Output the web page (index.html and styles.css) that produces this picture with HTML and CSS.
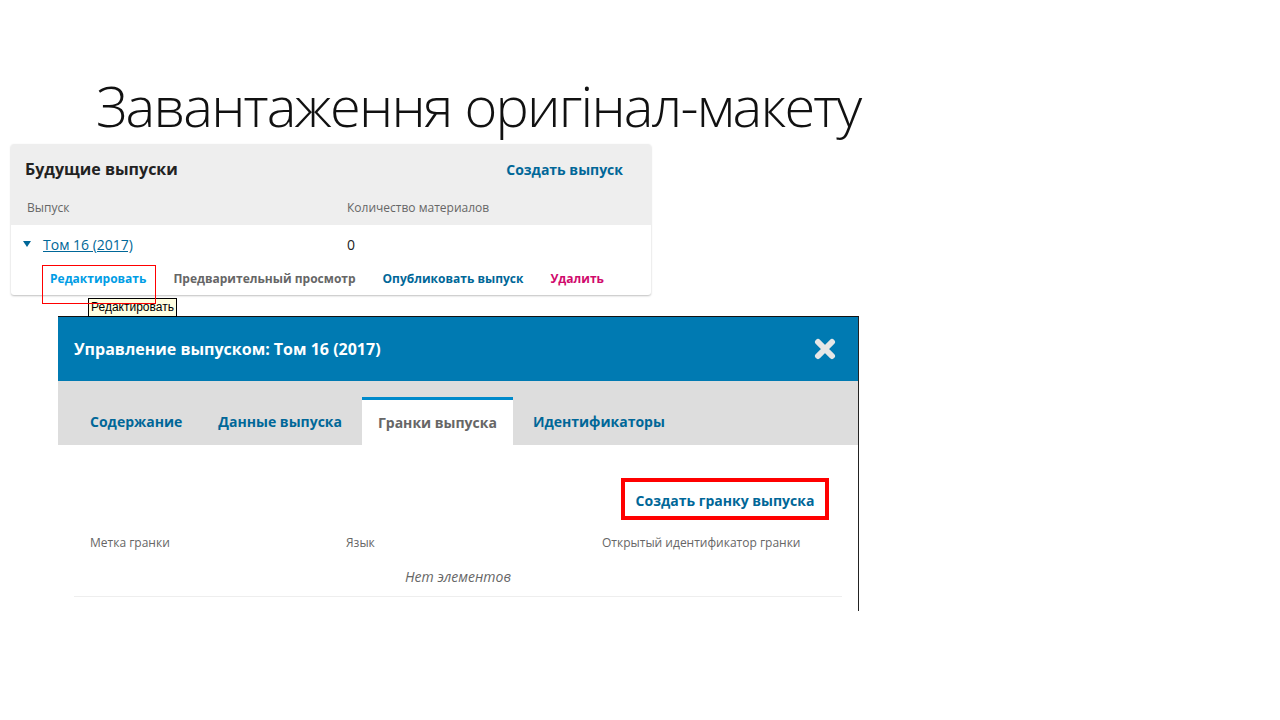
FILE: index.html
```html
<!DOCTYPE html>
<html lang="uk">
<head>
  <meta charset="UTF-8" />
  <title>Завантаження оригінал-макету</title>
  <link rel="stylesheet" href="styles.css">
</head>
<body>

<div class="slide">
  <h1 class="slide-title">Завантаження оригінал-макету</h1>

  <!-- Будущие выпуски -->
  <div class="card">
    <div class="card-top">
      <span class="card-title">Будущие выпуски</span>
      <a class="link-strong" href="#">Создать выпуск</a>
    </div>
    <div class="card-cols">
      <span class="col-issue">Выпуск</span>
      <span>Количество материалов</span>
    </div>
    <div class="card-row">
      <span class="col-issue"><span class="caret"></span><a class="issue-link" href="#">Том 16 (2017)</a></span>
      <span>0</span>
    </div>
    <div class="card-actions">
      <a class="act act-edit" href="#">Редактировать<span class="mark-box"></span><span class="tooltip">Редактировать</span></a>
      <a class="act act-grey" href="#">Предварительный просмотр</a>
      <a class="act act-blue" href="#">Опубликовать выпуск</a>
      <a class="act act-del" href="#">Удалить</a>
    </div>
  </div>

  <!-- Модальное окно -->
  <div class="modal">
    <div class="modal-head">
      <span class="modal-title">Управление выпуском: Том 16 (2017)</span>
      <svg class="close" width="22" height="22" viewBox="0 0 22 22">
        <path d="M4 4 L18 18 M18 4 L4 18" stroke="#e6e6e6" stroke-width="6" stroke-linecap="round"/>
      </svg>
    </div>
    <div class="tabs">
      <a class="tab" href="#">Содержание</a>
      <a class="tab" href="#">Данные выпуска</a>
      <a class="tab active" href="#">Гранки выпуска</a>
      <a class="tab" href="#">Идентификаторы</a>
    </div>
    <div class="modal-body">
      <div class="grid-actions">
        <a class="add-galley" href="#">Создать гранку выпуска</a>
      </div>
      <div class="grid-cols">
        <span>Метка гранки</span>
        <span>Язык</span>
        <span>Открытый идентификатор гранки</span>
      </div>
      <div class="grid-empty">Нет элементов</div>
    </div>
  </div>
</div>

</body>
</html>
```

FILE: styles.css
```css
body {
  margin: 0;
  background: #fff;
  font-family: "Open Sans", "Noto Sans", sans-serif;
  color: #222;
}

a {
  text-decoration: none;
}

.slide {
  width: 1280px;
  height: 720px;
  overflow: hidden;
  padding-top: 70px;
  box-sizing: border-box;
}

.slide-title {
  margin: 0 0 0 96px;
  height: 74px;
  font-size: 56px;
  line-height: 70px;
  font-weight: 300;
  letter-spacing: -1.8px;
  color: #111;
  white-space: nowrap;
}

/* Карточка */
.card {
  margin-left: 11px;
  width: 640px;
  background: #fff;
  border-radius: 3px;
  box-shadow: 0 1px 2px rgba(0, 0, 0, 0.25);
  font-size: 13px;
}

.card-top {
  display: flex;
  justify-content: space-between;
  align-items: center;
  height: 42px;
  padding: 4px 28px 0 14px;
  background: #eee;
  border-radius: 3px 3px 0 0;
}

.card-title {
  font-size: 16px;
  font-weight: bold;
  color: #222;
}

.link-strong {
  font-size: 14px;
  font-weight: bold;
  color: #006798;
}

.card-cols {
  display: flex;
  align-items: center;
  height: 35px;
  padding-left: 16px;
  background: #eee;
  font-size: 12px;
  color: #666;
}

.col-issue {
  width: 320px;
  display: flex;
  align-items: center;
}

.card-row {
  display: flex;
  align-items: center;
  height: 38px;
  padding-left: 16px;
  font-size: 14px;
  color: #222;
}

.card-row .col-issue {
  margin-left: -4px;
  width: 324px;
}

.caret {
  width: 0;
  height: 0;
  border-left: 4px solid transparent;
  border-right: 4px solid transparent;
  border-top: 6px solid #006798;
  margin-right: 12px;
}

.issue-link {
  color: #006798;
  text-decoration: underline;
}

.card-actions {
  display: flex;
  align-items: center;
  gap: 27px;
  height: 32px;
  padding-left: 39px;
  font-size: 12px;
  font-weight: bold;
}

.act {
  position: relative;
  line-height: 16px;
}

.act-edit { color: #009de5; }
.act-grey { color: #666; }
.act-blue { color: #006798; }
.act-del { color: #d00a6c; }

.mark-box {
  position: absolute;
  left: -8px;
  top: -6px;
  width: 112px;
  height: 37px;
  border: 1px solid #f00;
  z-index: 3;
}

.tooltip {
  position: absolute;
  left: 38px;
  top: 27px;
  padding: 1px 2px;
  background: #ffffe1;
  border: 1px solid #000;
  font-family: "Liberation Sans", sans-serif;
  font-size: 12px;
  line-height: 15px;
  font-weight: normal;
  color: #000;
  white-space: nowrap;
  z-index: 2;
}

/* Модальное окно */
.modal {
  margin: 21px 0 0 58px;
  width: 800px;
  height: 294px;
  border-top: 1px solid #111;
  border-right: 1px solid #222;
  background: #fff;
}

.modal-head {
  display: flex;
  justify-content: space-between;
  align-items: center;
  height: 64px;
  padding: 0 22px 0 16px;
  background: #007ab2;
}

.modal-title {
  font-size: 16px;
  font-weight: bold;
  color: #fff;
}

.tabs {
  display: flex;
  align-items: flex-end;
  gap: 4px;
  height: 64px;
  padding-left: 16px;
  background: #ddd;
}

.tab {
  display: flex;
  align-items: center;
  height: 48px;
  padding: 0 16px;
  font-size: 14px;
  font-weight: bold;
  color: #006798;
  box-sizing: border-box;
}

.tab.active {
  background: #fff;
  border-top: 3px solid #008acb;
  color: #666;
}

.modal-body {
  padding: 33px 16px 0 16px;
}

.grid-actions {
  display: flex;
  justify-content: flex-end;
  padding-right: 13px;
}

.add-galley {
  display: flex;
  align-items: center;
  justify-content: center;
  width: 208px;
  height: 42px;
  padding-top: 2px;
  box-sizing: border-box;
  border: 4px solid #f00;
  font-size: 14px;
  font-weight: bold;
  color: #006798;
}

.grid-cols {
  display: grid;
  grid-template-columns: repeat(3, 1fr);
  height: 44px;
  align-items: center;
  font-size: 12px;
  color: #666;
}

.grid-cols span {
  padding-left: 16px;
}

.grid-empty {
  height: 32px;
  line-height: 26px;
  text-align: center;
  font-size: 14px;
  font-style: italic;
  color: #666;
  border-bottom: 1px solid #eee;
}
```
